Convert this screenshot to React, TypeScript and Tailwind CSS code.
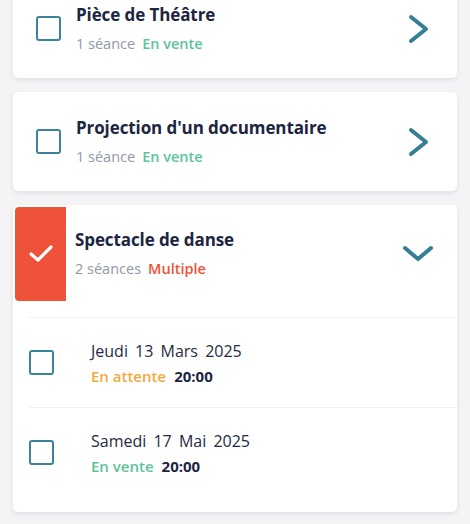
import React from "react";

const font = { fontFamily: "'Open Sans', 'Noto Sans', sans-serif" };

function Box() {
  return <div className="w-[25px] h-[25px] shrink-0 rounded-[3px] border-2 border-[#3a8498]" />;
}

function ChevronRight() {
  return (
    <svg width="22" height="30" viewBox="0 0 22 30" fill="none" className="shrink-0">
      <polyline points="3,3 18,15 3,27" stroke="#347f93" strokeWidth="4" strokeLinecap="round" strokeLinejoin="round" />
    </svg>
  );
}

function ChevronDown() {
  return (
    <svg width="32" height="18" viewBox="0 0 32 18" fill="none" className="shrink-0">
      <polyline points="3,3 16,14 29,3" stroke="#347f93" strokeWidth="4" strokeLinecap="round" strokeLinejoin="round" />
    </svg>
  );
}

function EventCard({ title, count, status, first }: { title: string; count: string; status: string; first?: boolean }) {
  return (
    <div
      className={`h-[99px] shrink-0 bg-white rounded-[5px] shadow-[0_2px_5px_rgba(30,30,60,0.09)] flex items-center pl-[23px] pr-[27px] ${first ? "-mt-[21px]" : ""}`}
    >
      <Box />
      <div className="flex-1 flex flex-col gap-[10px] ml-[15px]">
        <div className="text-[17px] font-bold text-[#1c2541] leading-[20px] tracking-[-0.1px]">{title}</div>
        <div className="flex gap-[7px] text-[14.5px] leading-[18px]">
          <span className="text-[#9198a6]">{count}</span>
          <span className="font-semibold text-[#5cc49a]">{status}</span>
        </div>
      </div>
      <ChevronRight />
    </div>
  );
}

function Session({ date, status, statusColor, time }: { date: string; status: string; statusColor: string; time: string }) {
  return (
    <div className="h-[89px] flex items-center pl-[16px]">
      <Box />
      <div className="flex flex-col gap-[6px] ml-[37px]">
        <div className="text-[16px] text-[#1f2a44] leading-[20px]" style={{ wordSpacing: "3px" }}>{date}</div>
        <div className="flex gap-[8px] text-[15px] leading-[18px]">
          <span className={`font-semibold ${statusColor}`}>{status}</span>
          <span className="font-bold text-[#1c2541]">{time}</span>
        </div>
      </div>
    </div>
  );
}

export default function App() {
  return (
    <div className="w-[470px] h-[524px] overflow-hidden bg-[#f4f4f7] px-[13px] flex flex-col gap-[14px]" style={font}>
      <EventCard first title="Pièce de Théâtre" count="1 séance" status="En vente" />
      <EventCard title="Projection d'un documentaire" count="1 séance" status="En vente" />

      <div className="shrink-0 bg-white rounded-[5px] shadow-[0_2px_5px_rgba(30,30,60,0.09)] pb-[15px]">
        <div className="flex items-start pr-[23px] pb-[14px]">
          <div className="mt-[2px] ml-[2px] w-[51px] h-[94px] shrink-0 bg-[#ee5339] rounded-tl-[4px] rounded-bl-[4px] flex items-center justify-center">
            <svg width="26" height="20" viewBox="0 0 26 20" fill="none">
              <polyline points="3,10 10,16 23,3" stroke="white" strokeWidth="3.2" strokeLinecap="round" strokeLinejoin="round" />
            </svg>
          </div>
          <div className="flex-1 h-[98px] flex items-center">
            <div className="flex-1 flex flex-col gap-[10px] ml-[9px]">
              <div className="text-[17px] font-bold text-[#1c2541] leading-[20px] tracking-[-0.1px]">Spectacle de danse</div>
              <div className="flex gap-[7px] text-[14.5px] leading-[18px]">
                <span className="text-[#9198a6]">2 séances</span>
                <span className="font-semibold text-[#ee5339]">Multiple</span>
              </div>
            </div>
            <ChevronDown />
          </div>
        </div>
        <div className="ml-[16px] border-t border-[#f1f1f4]" />
        <Session date="Jeudi 13 Mars 2025" status="En attente" statusColor="text-[#f2a93b]" time="20:00" />
        <div className="ml-[16px] border-t border-[#f1f1f4]" />
        <Session date="Samedi 17 Mai 2025" status="En vente" statusColor="text-[#5cc49a]" time="20:00" />
      </div>
    </div>
  );
}
